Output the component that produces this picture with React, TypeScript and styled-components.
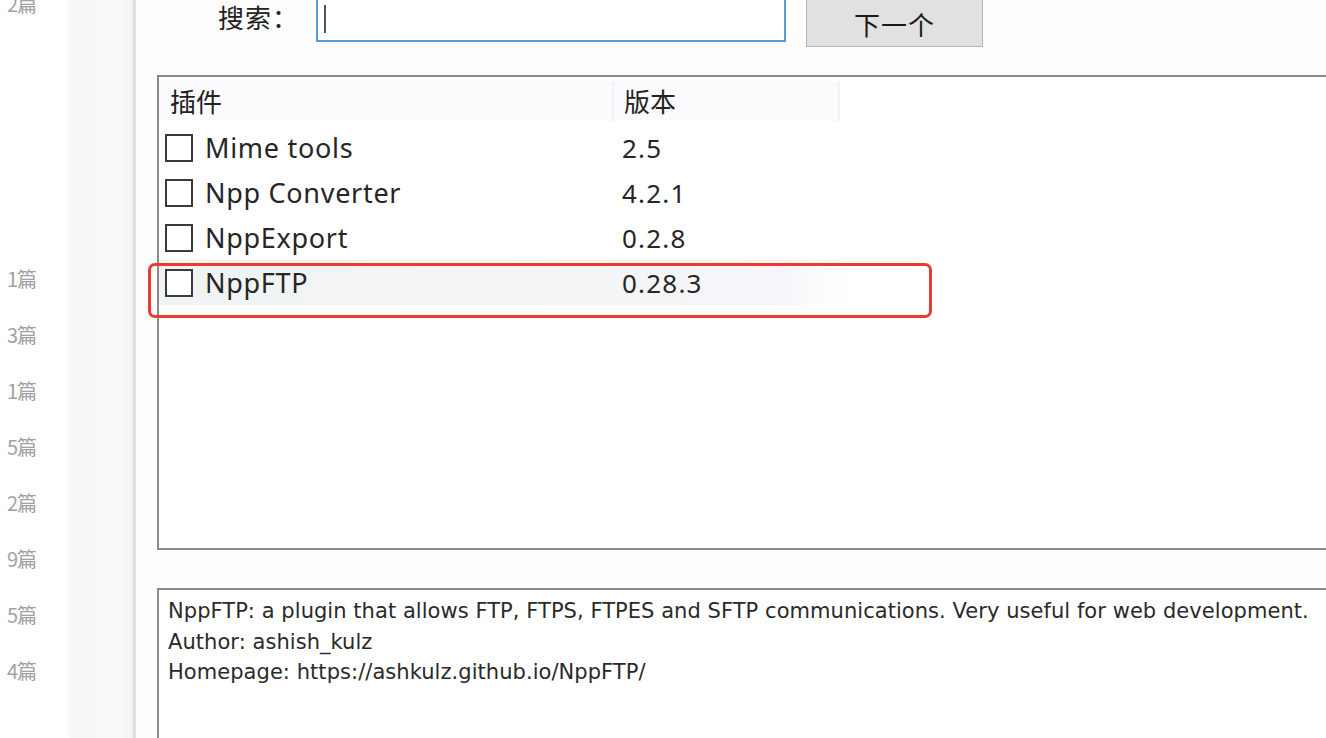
import React from "react";
import styled, { createGlobalStyle } from "styled-components";

const Global = createGlobalStyle`
  html, body { margin: 0; padding: 0; background: #fdfdfd; }
  body { width: 1326px; height: 738px; overflow: hidden; }
`;

const UI = `"Noto Sans", "Noto Sans CJK SC", sans-serif`;
const CJK = `"Noto Sans CJK SC", "Noto Sans", sans-serif`;

const Page = styled.div`
  display: flex;
  width: 1326px;
  height: 738px;
  overflow: hidden;
  background: #fdfdfd;
`;

const Sidebar = styled.div`
  width: 133px;
  flex: none;
  display: flex;
  background: linear-gradient(90deg, #ffffff 0, #ffffff 66px, #f7f7f7 72px, #fafafa 120px, #f2f2f2 133px);
`;

const CountColumn = styled.div`
  width: 68px;
  display: flex;
  flex-direction: column;
  padding-left: 7px;
  box-sizing: border-box;
`;

const Count = styled.div<{ $top?: number }>`
  font-family: ${CJK};
  font-size: 20px;
  line-height: 28px;
  height: 28px;
  color: #a2a2a2;
  margin-top: ${(p) => p.$top ?? 28}px;
  letter-spacing: -1px;
`;

const SideLine = styled.div`
  width: 3px;
  flex: none;
  background: linear-gradient(90deg, #d6d6d6, #e6e6e6);
`;

const Dialog = styled.div`
  flex: 1;
  display: flex;
  flex-direction: column;
  padding-left: 21px;
  min-width: 0;
`;

const SearchRow = styled.div`
  display: flex;
  align-items: flex-start;
  height: 47px;
`;

const SearchLabel = styled.div`
  font-family: ${CJK};
  font-size: 26px;
  color: #222;
  margin-left: 61px;
  margin-top: -2px;
  width: 98px;
  flex: none;
  line-height: 38px;
  letter-spacing: 1px;
  white-space: nowrap;
`;

const SearchInput = styled.div`
  width: 460px;
  height: 40px;
  margin-top: -1px;
  border: 2px solid #5b9bd5;
  border-top-width: 1px;
  background: #ffffff;
  display: flex;
  align-items: center;
  padding-left: 6px;
  box-sizing: content-box;
`;

const Caret = styled.div`
  width: 2px;
  height: 28px;
  background: #555;
  margin-top: -2px;
`;

const NextButton = styled.div`
  margin-left: 20px;
  margin-top: -1px;
  width: 175px;
  height: 46px;
  border: 1px solid #b4b4b4;
  background: #e1e1e1;
  font-family: ${CJK};
  font-size: 26px;
  color: #1a1a1a;
  display: flex;
  align-items: center;
  justify-content: center;
  letter-spacing: 1px;
`;

const ListBox = styled.div`
  position: relative;
  margin-top: 28px;
  height: 475px;
  width: 1200px;
  border: 2px solid #8a8a8a;
  border-right: none;
  background: #ffffff;
  box-sizing: border-box;
`;

const HeaderRow = styled.div`
  display: flex;
  height: 48px;
  align-items: center;
`;

const HeaderCell = styled.div<{ $w: number; $pad: number }>`
  width: ${(p) => p.$w}px;
  height: 40px;
  padding-left: ${(p) => p.$pad}px;
  box-sizing: border-box;
  font-family: ${CJK};
  font-size: 26px;
  line-height: 40px;
  color: #222;
  background: #fbfbfd;
  border-right: 2px solid #f2f3f8;
`;

const Row = styled.div<{ $hl?: boolean }>`
  display: flex;
  align-items: center;
  height: 45px;
  padding-left: 6px;
  background: ${(p) =>
    p.$hl
      ? "linear-gradient(90deg, #f0f3f4 0, #f3f5f6 400px, #f7f5f9 620px, #ffffff 690px)"
      : "transparent"};
`;

const Check = styled.div`
  width: 24px;
  height: 24px;
  border: 2px solid #3a3a3a;
  background: #fff;
  flex: none;
`;

const NameCell = styled.div`
  width: 417px;
  margin-left: 12px;
  font-family: ${UI};
  font-size: 27px;
  letter-spacing: 0.7px;
  color: #262626;
  line-height: 36px;
`;

const VersionCell = styled.div`
  font-family: ${UI};
  font-size: 26px;
  color: #262626;
  letter-spacing: 1.2px;
  line-height: 36px;
`;

const Highlight = styled.div`
  position: absolute;
  left: -11px;
  top: 186px;
  width: 778px;
  height: 49px;
  border: 3px solid #ec3a33;
  border-radius: 7px;
  pointer-events: none;
`;

const DescBox = styled.div`
  margin-top: 38px;
  flex: 1;
  width: 1200px;
  border: 2px solid #8a8a8a;
  border-right: none;
  border-bottom: none;
  background: #ffffff;
  padding: 6px 0 0 9px;
  box-sizing: border-box;
`;

const DescLine = styled.div`
  font-family: "DejaVu Sans", sans-serif;
  font-size: 21px;
  line-height: 30.5px;
  letter-spacing: 0.05px;
  color: #2a2a2a;
  white-space: nowrap;
`;

const plugins = [
  { name: "Mime tools", version: "2.5" },
  { name: "Npp Converter", version: "4.2.1" },
  { name: "NppExport", version: "0.2.8" },
  { name: "NppFTP", version: "0.28.3", hl: true },
];

const counts = ["1篇", "3篇", "1篇", "5篇", "2篇", "9篇", "5篇", "4篇"];

export default function App() {
  return (
    <>
      <Global />
      <Page>
        <Sidebar>
          <CountColumn>
            <Count $top={-10}>2篇</Count>
            {counts.map((c, i) => (
              <Count key={i} $top={i === 0 ? 247 : 28}>
                {c}
              </Count>
            ))}
          </CountColumn>
        </Sidebar>
        <SideLine />
        <Dialog>
          <SearchRow>
            <SearchLabel>搜索：</SearchLabel>
            <SearchInput>
              <Caret />
            </SearchInput>
            <NextButton>下一个</NextButton>
          </SearchRow>
          <ListBox>
            <HeaderRow>
              <HeaderCell $w={455} $pad={11}>插件</HeaderCell>
              <HeaderCell $w={226} $pad={10}>版本</HeaderCell>
            </HeaderRow>
            {plugins.map((p) => (
              <Row key={p.name} $hl={p.hl}>
                <Check />
                <NameCell>{p.name}</NameCell>
                <VersionCell>{p.version}</VersionCell>
              </Row>
            ))}
            <Highlight />
          </ListBox>
          <DescBox>
            <DescLine>
              NppFTP: a plugin that allows FTP, FTPS, FTPES and SFTP communications. Very useful for web development.
            </DescLine>
            <DescLine>Author: ashish_kulz</DescLine>
            <DescLine>Homepage: https://ashkulz.github.io/NppFTP/</DescLine>
          </DescBox>
        </Dialog>
      </Page>
    </>
  );
}
